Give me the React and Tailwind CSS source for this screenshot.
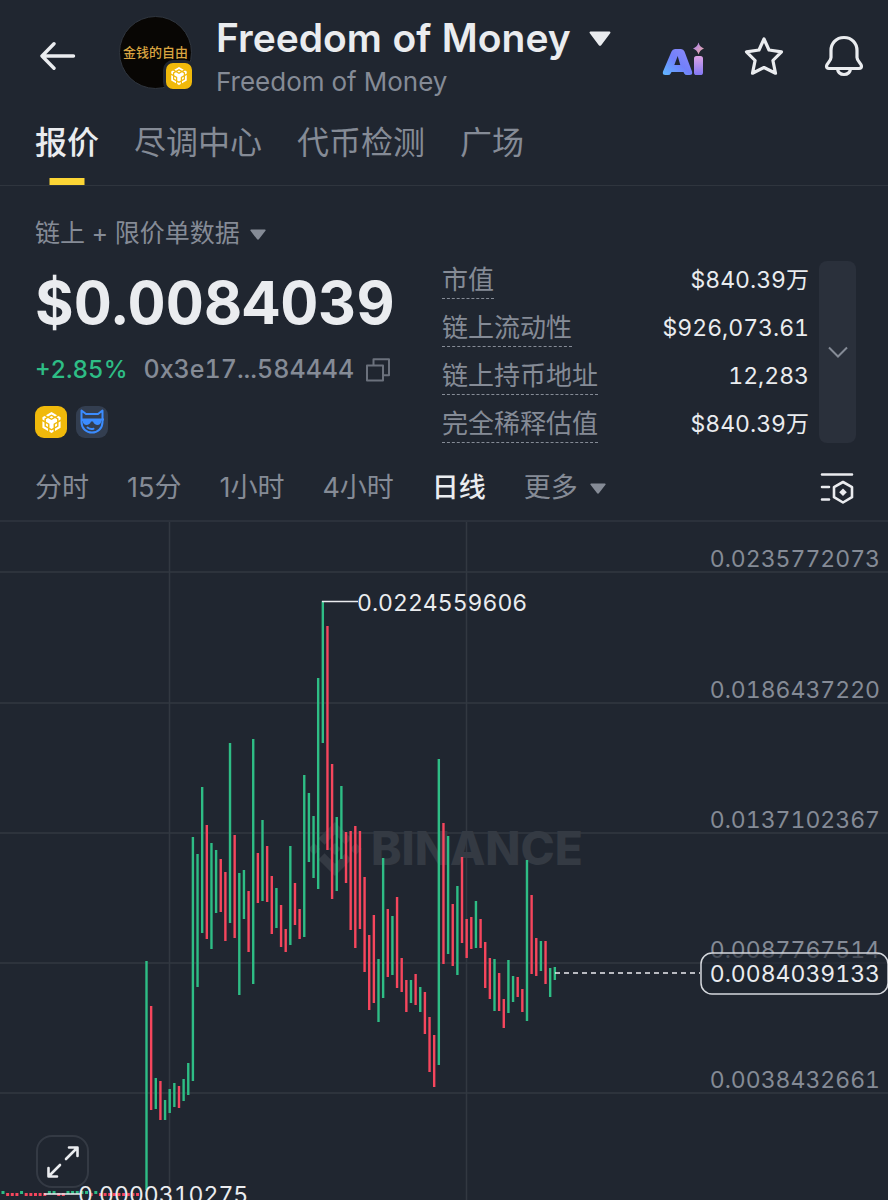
import { useState } from "react";
import clsx from "clsx";

const TABS = ["报价", "尽调中心", "代币检测", "广场"];
const PERIODS = ["分时", "15分", "1小时", "4小时", "日线"];

const STATS = [
  { label: "市值", value: "$840.39万" },
  { label: "链上流动性", value: "$926,073.61" },
  { label: "链上持币地址", value: "12,283" },
  { label: "完全稀释估值", value: "$840.39万" },
];

const GREEN = "#2ebd85";
const RED = "#f6465d";

// [direction, high, low] in chart units
const CANDLES = [
  ["g", 439, 668], ["r", 484, 588], ["g", 556, 587], ["r", 559, 598],
  ["g", 578, 598], ["g", 567, 591], ["g", 561, 585], ["r", 564, 586],
  ["g", 557, 579], ["g", 541, 573], ["g", 315, 559], ["g", 332, 465],
  ["g", 265, 411], ["r", 303, 417], ["g", 321, 427], ["g", 328, 391],
  ["r", 337, 390], ["r", 350, 419], ["g", 221, 401], ["r", 313, 416],
  ["g", 351, 473], ["g", 348, 397], ["r", 369, 430], ["g", 217, 462],
  ["r", 331, 381], ["g", 298, 379], ["r", 324, 380], ["r", 354, 412],
  ["g", 366, 406], ["r", 383, 425], ["r", 407, 430], ["g", 324, 423],
  ["r", 361, 403], ["r", 387, 417], ["g", 253, 415], ["g", 271, 340],
  ["g", 294, 356], ["g", 156, 367], ["g", 79, 221], ["r", 104, 328],
  ["r", 242, 377], ["g", 295, 369], ["g", 264, 337], ["r", 310, 361],
  ["r", 309, 408], ["r", 304, 426], ["r", 309, 407], ["r", 355, 450],
  ["r", 413, 488], ["r", 393, 481], ["g", 437, 500], ["g", 336, 476],
  ["r", 387, 455], ["g", 394, 453], ["r", 375, 466], ["r", 436, 470],
  ["r", 458, 490], ["g", 458, 481], ["r", 452, 483], ["g", 465, 490],
  ["r", 470, 512], ["r", 495, 550], ["r", 513, 565], ["g", 237, 543],
  ["r", 301, 442], ["g", 314, 432], ["r", 382, 444], ["g", 364, 453],
  ["r", 335, 421], ["r", 397, 436], ["r", 395, 427], ["g", 379, 426],
  ["r", 397, 426], ["r", 420, 466], ["r", 436, 477], ["g", 437, 489],
  ["r", 451, 489], ["r", 477, 506], ["g", 438, 491], ["g", 454, 480],
  ["r", 455, 475], ["r", 467, 490], ["g", 338, 499], ["r", 373, 452],
  ["r", 416, 454], ["g", 419, 449], ["r", 419, 462], ["g", 446, 475],
  ["g", 445, 458],
];

// flat days before the launch, one letter per day
const FLAT_DAYS = "grrrgrrrrrggrrgggggrgrrrrrrrrr";

const GRID = [
  { y: 50, label: "0.0235772073" },
  { y: 181, label: "0.0186437220" },
  { y: 311, label: "0.0137102367" },
  { y: 441, label: "0.0087767514" },
  { y: 571, label: "0.0038432661" },
];

const STEP = 4.64;
const FIRST_X = 146.5;

const Caret = ({ className }) => (
  <svg viewBox="0 0 20 14" className={className} fill="currentColor" aria-hidden="true">
    <path d="M1.2 0.5h17.6c.9 0 1.3 1 .7 1.7l-8.4 11c-.6.7-1.6.7-2.2 0L.5 2.2C-.1 1.5.3.5 1.2.5z" />
  </svg>
);

const BnbChain = ({ className }) => (
  <svg viewBox="0 0 24 24" className={className} fill="white" aria-hidden="true">
    <path d="M5.631 3.676 12.001 0l6.367 3.676-2.34 1.358L12 2.716 7.972 5.034l-2.34-1.358Zm12.737 4.636-2.34-1.358L12 9.272 7.972 6.954l-2.34 1.358v2.716l4.026 2.318v4.636L12 19.341l2.341-1.359v-4.636l4.027-2.318V8.312Zm0 7.352v-2.716l-2.34 1.358v2.716l2.34-1.358Zm1.663.96-4.027 2.318v2.717l6.368-3.677V10.63l-2.34 1.358v4.636Zm-2.34-10.63 2.34 1.358v2.716l2.341-1.358V5.994l-2.34-1.358-2.342 1.358ZM9.657 19.926v2.716L12 24l2.341-1.358v-2.716l-2.34 1.358-2.342-1.358Zm-4.027-4.262 2.34 1.358v-2.716l-2.34-1.358v2.716Zm4.027-9.67L12 7.352l2.341-1.358L12 4.636 9.658 5.994Zm-5.69 1.358 2.341-1.358-2.34-1.358L1.627 5.994V8.71l2.34 1.358V7.352Zm0 4.636L1.627 10.63v7.352l6.367 3.677v-2.717l-4.027-2.318v-4.636Z" />
  </svg>
);

const Header = () => (
  <header className="flex items-center pl-10 pr-6 pt-3">
    <button aria-label="返回" className="shrink-0">
      <svg viewBox="0 0 36 28" className="h-7 w-9" fill="none" stroke="currentColor" strokeWidth="3.4" strokeLinecap="round" strokeLinejoin="round">
        <path d="M14 1.8 2 14l12 12.2M2.5 14H33.5" />
      </svg>
    </button>
    <div className="relative ml-[43px] mt-1 flex size-[73px] shrink-0 items-center justify-center self-start rounded-full border border-[#2f353e] bg-[#080604]">
      <span className="whitespace-nowrap text-[13px] font-medium text-[#d9a441]">金钱的自由</span>
      <span className="absolute -bottom-1 -right-1 flex size-8 items-center justify-center rounded-[10px] border-[3px] border-[#202630] bg-[#f0b90b]">
        <BnbChain className="size-[18px]" />
      </span>
    </div>
    <div className="ml-6 min-w-0">
      <h1>
        <button className="flex items-center gap-[18px] whitespace-nowrap text-[39px] font-semibold leading-[52px]">
          Freedom of Money
          <Caret className="h-[15px] w-[22px]" />
        </button>
      </h1>
      <p className="text-[26px] leading-9 text-[#858b96]">Freedom of Money</p>
    </div>
    <div className="ml-auto flex shrink-0 items-center gap-10">
      <button aria-label="Ai">
        <svg viewBox="0 0 42 42" className="size-[42px]">
          <defs>
            <linearGradient id="ai-a" x1="0" y1="1" x2="1" y2="0">
              <stop offset="0" stopColor="#5fb8ff" />
              <stop offset="0.5" stopColor="#7280fa" />
              <stop offset="1" stopColor="#8f8cf8" />
            </linearGradient>
            <linearGradient id="ai-i" x1="0" y1="1" x2="0" y2="0">
              <stop offset="0" stopColor="#8378f5" />
              <stop offset="1" stopColor="#dda4e4" />
            </linearGradient>
            <linearGradient id="ai-spark" x1="0" y1="0" x2="1" y2="1">
              <stop offset="0" stopColor="#a77df5" />
              <stop offset="1" stopColor="#f0b09c" />
            </linearGradient>
          </defs>
          <path
            fill="url(#ai-a)"
            fillRule="evenodd"
            d="M13 14h6q2.500 0 3.500 2.500L30 36.500Q31 40 27.500 40H25q-2 0-2.800-1.500L21.500 37H9.500l-.8 1.500Q8 40 6 40H3.500Q0 40 1 36.500L9.500 16.500Q10.500 14 13 14zM15.700 21l-3.400 9h6z"
          />
          <rect x="32" y="21" width="9" height="19" rx="2.6" fill="url(#ai-i)" />
          <path fill="url(#ai-spark)" d="M36.500 7.500q1.200 4.600 5.500 6-4.300 1.400-5.500 6-1.200-4.600-5.500-6 4.300-1.400 5.500-6z" />
        </svg>
      </button>
      <button aria-label="收藏">
        <svg viewBox="0 0 40 40" className="size-10" fill="none" stroke="currentColor" strokeWidth="3.2" strokeLinejoin="round">
          <path d="M20 3l5 11 12.500 1.800-8.600 8.700 2.600 12.700L20 31.500 8.500 37.200l2.600-12.700L2.500 15.800 15 14z" />
        </svg>
      </button>
      <button aria-label="提醒">
        <svg viewBox="0 0 40 42" className="h-[42px] w-10" fill="none" stroke="currentColor" strokeWidth="3.2" strokeLinejoin="round">
          <path d="M20 2.500C12 2.500 7 8.500 7 15.500v7c0 4-4.500 6-4.500 8.500 0 1.800 1 2.500 2.500 2.500h30c1.500 0 2.500-.7 2.500-2.500 0-2.500-4.500-4.500-4.500-8.500v-7c0-7-5-13-13-13z" />
          <path d="M13.500 34c.5 3.500 3 5.500 6.500 5.500s6-2 6.500-5.500" />
        </svg>
      </button>
    </div>
  </header>
);

const PriceSummary = () => (
  <section className="px-[35px] pt-[26px]">
    <button className="flex h-11 items-center gap-[10px] text-[25px] text-[#858b96]">
      链上 + 限价单数据
      <Caret className="h-[11px] w-4" />
    </button>
    <div className="flex items-start">
      <div className="w-[407px] shrink-0">
        <p className="flex h-[94px] items-center text-[59px] font-bold">$0.0084039</p>
        <div className="flex h-10 items-center gap-4 font-medium">
          <span className="text-[24px] text-[#2ebd85]">+2.85%</span>
          <span className="text-[25px] text-[#858b96]">0x3e17...584444</span>
          <button aria-label="复制地址" className="-ml-1 text-[#6b717c]">
            <svg viewBox="0 0 24 24" className="size-6" fill="none" stroke="currentColor" strokeWidth="2">
              <path d="M1 7.500h16v15H1zM7.500 7V1.200H23v16h-5.500" strokeLinejoin="round" />
            </svg>
          </button>
        </div>
        <div className="mt-4 flex gap-[9px]">
          <span className="flex size-8 items-center justify-center rounded-[9px] bg-[#f0b90b]">
            <BnbChain className="size-[21px]" />
          </span>
          <span className="flex size-8 items-center justify-center rounded-[9px] bg-[#333e50]">
            <svg viewBox="0 0 26 26" className="size-[26px]" fill="none" stroke="#3b8cff" strokeWidth="2" strokeLinejoin="round" aria-hidden="true">
              <path d="M2.500 1.500l4.500 3.500h12l4.500-3.500V13c0 6.500-5 10.500-10.500 10.500S2.500 19.500 2.500 13z" />
              <path d="M2 9.500h23v2h-2.500c-.5 3-2 4.500-4 4.500s-3.800-1.500-4.500-3.500h-2c-.7 2-2.500 3.500-4.500 3.500s-3.500-1.500-4-4H2z" fill="#3b8cff" stroke="none" />
              <path d="M8.500 18.500q2.500 2 6 1.200" strokeLinecap="round" />
            </svg>
          </span>
        </div>
      </div>
      <dl className="min-w-0 flex-1">
        {STATS.map((stat) => (
          <div key={stat.label} className="flex h-12 items-center justify-between whitespace-nowrap">
            <dt className="border-b border-dashed border-[#858b96] text-[26px] leading-9 text-[#858b96]">{stat.label}</dt>
            <dd className="text-[23px]">{stat.value}</dd>
          </div>
        ))}
      </dl>
      <button aria-label="展开更多数据" className="ml-[10px] mr-[-3px] mt-[5px] flex h-[182px] w-[37px] shrink-0 items-center justify-center rounded-lg bg-[#2a303b] text-[#858b96]">
        <svg viewBox="0 0 20 12" className="h-3 w-5" fill="none" stroke="currentColor" strokeWidth="2">
          <path d="M1 1.500l9 9 9-9" />
        </svg>
      </button>
    </div>
  </section>
);

const PeriodBar = () => {
  const [period, setPeriod] = useState("日线");

  return (
    <div className="flex h-[74px] items-center gap-[38px] border-b-2 border-[#2b313b] pl-[35px] pr-[34px] pt-2 text-[27px] normal-nums text-[#858b96]">
      {PERIODS.map((name) => (
        <button
          key={name}
          onClick={() => setPeriod(name)}
          className={clsx("whitespace-nowrap", name === period && "font-medium text-[#eaecef]")}
        >
          {name}
        </button>
      ))}
      <button className="flex items-center gap-3 whitespace-nowrap">
        更多
        <Caret className="h-[11px] w-4" />
      </button>
      <button aria-label="图表设置" className="ml-auto text-[#eaecef]">
        <svg viewBox="0 0 34 32" className="h-8 w-[34px]" fill="none" stroke="currentColor" strokeWidth="2.6" strokeLinecap="round" strokeLinejoin="round">
          <path d="M2 2.500h30M2 15h7M2 27.500h7" />
          <path d="M23 10l9 5.200v10L23 30.500l-9-5.300v-10z" />
          <path d="M23 16.500l3.800 3.800L23 24.100l-3.800-3.800z" fill="currentColor" stroke="none" />
        </svg>
      </button>
    </div>
  );
};

const PriceChart = () => (
  <section className="relative">
    <svg viewBox="0 0 888 678" className="block w-full" role="img" aria-label="日线价格走势">
      <g stroke="#323841" strokeWidth="1.5">
        {GRID.map((line) => (
          <path key={line.y} d={`M0 ${line.y}H888`} />
        ))}
        <path d="M169.500 0V678M466.500 0V678" />
      </g>

      <g fill="#343a43">
        <path
          transform="translate(308 300) scale(2.25)"
          d="M16.624 13.920l2.718 2.715-7.353 7.353-7.353-7.352 2.718-2.716 4.635 4.660 4.636-4.660zm4.637-4.636L24 12l-2.715 2.716L18.568 12l2.692-2.716zm-9.272 0l2.716 2.692-2.716 2.717L9.272 12l2.716-2.715zm-9.272 0L5.409 12l-2.691 2.692L0 12l2.716-2.716zM11.989.012l7.353 7.329-2.717 2.715-4.636-4.635-4.635 4.660-2.718-2.716 7.353-7.353z"
        />
        <text x="371" y="343" fontSize="46" fontWeight="800">BINANCE</text>
      </g>

      <g fill="#858b96" fontSize="23" textAnchor="end">
        {GRID.map((line) => (
          <text key={line.y} x="880" y={line.y - 5}>{line.label}</text>
        ))}
      </g>

      {FLAT_DAYS.split("").map((dir, i) => (
        <rect
          key={i}
          x={1.5 + i * STEP}
          y={dir === "g" ? 669 : 671}
          width="3"
          height="3"
          fill={dir === "g" ? GREEN : RED}
        />
      ))}
      {CANDLES.map(([dir, high, low], i) => (
        <rect
          key={i}
          x={FIRST_X - 1.2 + i * STEP}
          y={high}
          width="2.4"
          height={low - high}
          fill={dir === "g" ? GREEN : RED}
        />
      ))}

      <g stroke="#eaecef" strokeWidth="1.5">
        <path d="M322 79.500H358M44 672H80" />
        <path d="M555 451H700" strokeDasharray="5 4" />
      </g>
      <g fill="#eaecef" fontSize="23">
        <text x="357" y="89">0.0224559606</text>
        <text x="78" y="681">0.0000310275</text>
      </g>

      <rect x="701" y="431" width="187" height="41" rx="11" fill="#202630" fillOpacity="0.6" stroke="#d5d8dd" strokeWidth="1.5" />
      <text x="880" y="460" fontSize="23" textAnchor="end" fill="#eaecef">0.0084039133</text>
    </svg>

    <button aria-label="全屏" className="absolute bottom-3 left-9 flex size-[53px] items-center justify-center rounded-2xl border-2 border-[#343a44] bg-[#202630]">
      <svg viewBox="0 0 32 32" className="size-8" fill="none" stroke="currentColor" strokeWidth="2.6" strokeLinecap="round" strokeLinejoin="round">
        <path d="M19 13L30 2M22 1.500h8.500V10M13 19L2 30M1.500 22v8.500H10" />
      </svg>
    </button>
  </section>
);

const App = () => {
  const [tab, setTab] = useState("报价");

  return (
    <main className="min-h-screen bg-[#202630] font-['Inter','Noto_Sans_CJK_SC',sans-serif] tabular-nums text-[#eaecef]">
      <Header />
      <nav className="flex h-[86px] gap-[35px] border-b border-[#2f353e] pl-[35px] text-[32px]">
        {TABS.map((name) => (
          <button
            key={name}
            onClick={() => setTab(name)}
            className={clsx(
              "relative whitespace-nowrap",
              name === tab ? "font-medium text-[#eaecef]" : "text-[#858b96]"
            )}
          >
            {name}
            {name === tab && (
              <span className="absolute bottom-0 left-1/2 h-[7px] w-[35px] -translate-x-1/2 bg-[#fcd535]" />
            )}
          </button>
        ))}
      </nav>
      <PriceSummary />
      <PeriodBar />
      <PriceChart />
    </main>
  );
};

export default App;
